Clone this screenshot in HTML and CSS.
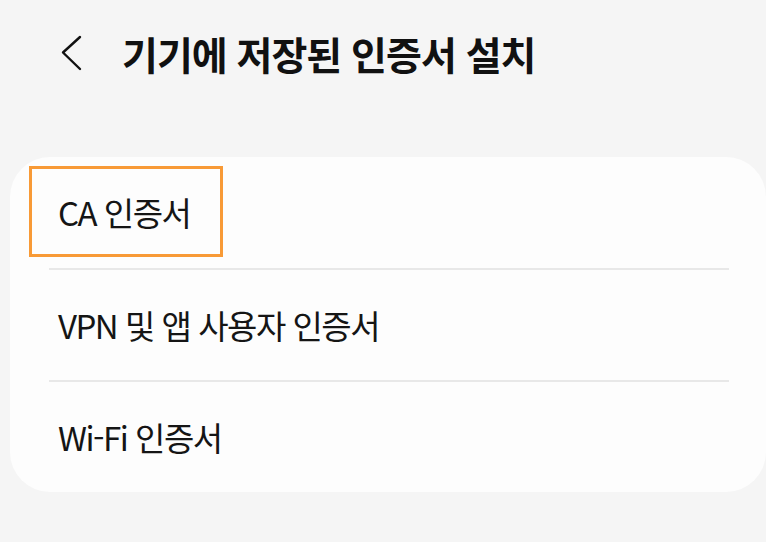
FILE: index.html
```html
<!DOCTYPE html>
<html lang="ko">
<head>
<meta charset="utf-8">
<link rel="stylesheet" href="styles.css">
</head>
<body>
<div class="screen">
  <header class="appbar">
    <span class="back" aria-label="뒤로">
      <svg width="24" height="36" viewBox="0 0 24 36"><path d="M20 2 L3 17.5 L20 34" fill="none" stroke="#111" stroke-width="2.4" stroke-linecap="round" stroke-linejoin="round"/></svg>
    </span>
    <h1 class="title">기기에 저장된 인증서 설치</h1>
  </header>
  <div class="card">
    <div class="row row-first">
      <span class="label">CA 인증서</span>
      <span class="highlight"></span>
    </div>
    <div class="divider"></div>
    <div class="row"><span class="label">VPN 및 앱 사용자 인증서</span></div>
    <div class="divider"></div>
    <div class="row"><span class="label">Wi-Fi 인증서</span></div>
  </div>
</div>
</body>
</html>
```
FILE: styles.css
```css
html, body {
  margin: 0;
  padding: 0;
  background: #f5f5f5;
}
body {
  font-family: "Noto Sans CJK KR", "Noto Sans", sans-serif;
  color: #111;
}
.screen {
  width: 766px;
  height: 542px;
  overflow: hidden;
  padding-left: 10px;
  box-sizing: border-box;
}
.appbar {
  height: 157px;
  display: flex;
  align-items: flex-start;
  padding-top: 35px;
  box-sizing: border-box;
}
.back {
  width: 24px;
  height: 36px;
  margin-left: 50px;
  display: flex;
}
.title {
  margin: -2px 0 0 38px;
  font-size: 39px;
  font-weight: 700;
  line-height: 40px;
  letter-spacing: -1px;
  color: #111;
}
.card {
  background: #fdfdfd;
  border-radius: 40px;
  width: 756px;
  display: flex;
  flex-direction: column;
}
.row {
  height: 110px;
  display: flex;
  align-items: center;
  padding-left: 48px;
  position: relative;
}
.row-first {
  height: 111px;
}
.label {
  font-size: 33px;
  line-height: 1;
  letter-spacing: -1.5px;
  color: #151515;
}
.divider {
  height: 2px;
  background: #e8e8e8;
  margin: 0 37px 0 39px;
}
.highlight {
  position: absolute;
  left: 19px;
  top: 9px;
  width: 188px;
  height: 85px;
  border: 3px solid #f89a36;
}
```
